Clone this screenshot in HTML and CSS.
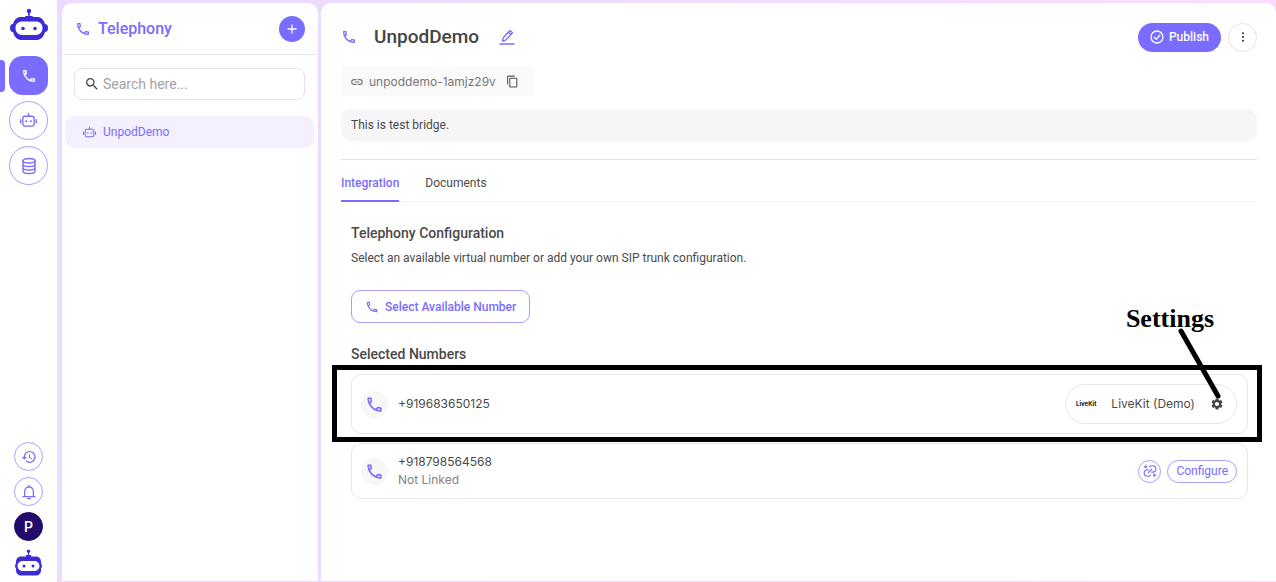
FILE: index.html
```
<!DOCTYPE html>
<html lang="en">
<head>
	<meta charset="UTF-8">
	<title>Telephony</title>
	<link rel="stylesheet" href="styles.css">
</head>
<body>
	<svg class="sprite" aria-hidden="true">
		<symbol id="phone" viewBox="0 0 24 24"><path d="M6.54 5c.06.89.21 1.76.45 2.59l-1.2 1.2c-.41-1.2-.67-2.47-.76-3.79h1.51m9.86 12.02c.85.24 1.72.39 2.6.45v1.49c-1.32-.09-2.59-.35-3.8-.75l1.2-1.19M7.5 3H4c-.55 0-1 .45-1 1 0 9.39 7.61 17 17 17 .55 0 1-.45 1-1v-3.49c0-.55-.45-1-1-1-1.24 0-2.45-.2-3.57-.57-.1-.04-.21-.05-.31-.05-.26 0-.51.1-.71.29l-2.2 2.2c-2.83-1.45-5.15-3.76-6.59-6.59l2.2-2.2c.28-.28.36-.67.25-1.02C8.7 6.45 8.5 5.25 8.5 4c0-.55-.45-1-1-1z"/></symbol>
		<symbol id="robot" viewBox="0 0 24 24"><g fill="none" stroke="currentColor" stroke-width="1.9" stroke-linecap="round"><rect x="4" y="6" width="16" height="14" rx="3"/><path d="M12 6V2M1 11v4M23 11v4"/></g><circle cx="8.800" cy="13" r="1.500"/><circle cx="15.200" cy="13" r="1.500"/></symbol>
	</svg>
	<div class="app">
		<nav class="rail">
			<a class="logo" href="#" aria-label="Home"><svg width="38" height="33" viewBox="0 0 38 33"><circle cx="19" cy="3" r="2.200"/><path d="M18.200 4h1.600v5h-1.600z"/><path fill-rule="evenodd" d="M16 8h6q1 0 1 1h3c5 0 7 2 8.500 5.500l.5 1.500c2 0 3 1.500 3 4s-1 4-3 4l-.5 1.500c-1.500 4-4 6.500-8.500 6.500H12c-4.500 0-7-2.500-8.500-6.500L3 24c-2 0-3-1.500-3-4s1-4 3-4l.5-1.500C5 11 7 9 12 9h3q0-1 1-1zM12.500 13.500C8 13.500 5.500 16 5.500 20s2.500 7 7 7h13c4.500 0 7-3 7-7s-2.500-6.500-7-6.500z"/><circle cx="13" cy="20.500" r="1.800"/><circle cx="25" cy="20.500" r="1.800"/></svg></a>
			<a class="rail-item current" href="#" aria-label="Telephony"><svg width="16" height="16"><use href="#phone"/></svg></a>
			<a class="rail-item" href="#" aria-label="Agents"><svg width="17" height="17"><use href="#robot"/></svg></a>
			<a class="rail-item" href="#" aria-label="Knowledge base"><svg class="line" width="18" height="18" viewBox="0 0 24 24"><ellipse cx="12" cy="5" rx="8" ry="3"/><path d="M4 5v14c0 1.700 3.600 3 8 3s8-1.300 8-3V5M4 9.700c0 1.700 3.600 3 8 3s8-1.300 8-3M4 14.300c0 1.700 3.600 3 8 3s8-1.300 8-3"/></svg></a>
			<div class="rail-bottom">
				<button class="round" aria-label="History"><svg width="16" height="16" viewBox="0 0 24 24"><path d="M13 3a9 9 0 0 0-9 9H1l3.900 3.900.07.140L9 12H6c0-3.870 3.130-7 7-7s7 3.130 7 7-3.130 7-7 7c-1.930 0-3.680-.79-4.940-2.060l-1.420 1.420A8.950 8.950 0 0 0 13 21a9 9 0 0 0 0-18zm-1 5v5l4.280 2.540.72-1.210-3.500-2.080V8H12z"/></svg></button>
				<button class="round" aria-label="Notifications"><svg class="line" width="16" height="16" viewBox="0 0 24 24"><path d="M3 19h18M5.500 19v-8a6.500 6.500 0 0 1 13 0v8M12 4V2M10 22h4"/></svg></button>
				<button class="round avatar">P</button>
				<a class="logo small" href="#" aria-label="Assistant"><svg width="27" height="27" viewBox="0 0 27 27"><circle cx="13.500" cy="2.200" r="1.700"/><path d="M13 3h1v4h-1z"/><path fill-rule="evenodd" d="M11 6h5v1.500h4c4 0 6 2 6 5.500v1.500c1.200.8 1.200 4.200 0 5V21c0 3.500-2 5.500-6 5.500H7c-4 0-6-2-6-5.500v-1.500c-1.200-.8-1.200-4.200 0-5V13c0-3.500 2-5.500 6-5.500h4zM7.500 12c-3 0-5 2.500-5 5s2 5 5 5h12c3 0 5-2.500 5-5s-2-5-5-5z"/><circle cx="9" cy="17" r="1.500"/><circle cx="18" cy="17" r="1.500"/></svg></a>
			</div>
		</nav>
		<aside class="panel">
			<header class="panel-head">
				<svg width="16" height="16"><use href="#phone"/></svg>
				<h2>Telephony</h2>
				<button class="add" aria-label="Add"><svg width="12" height="12" viewBox="0 0 12 12"><path d="M6 1.500v9M1.500 6h9" stroke="currentColor" stroke-width="1.300"/></svg></button>
			</header>
			<label class="search">
				<svg width="16" height="16" viewBox="0 0 24 24"><path d="M15.500 14h-.79l-.28-.27A6.470 6.470 0 0 0 16 9.500 6.500 6.500 0 1 0 9.500 16c1.610 0 3.090-.59 4.230-1.570l.27.28v.79l5 4.990L20.490 19l-4.990-5zm-6 0C7.010 14 5 11.990 5 9.500S7.010 5 9.500 5 14 7.010 14 9.500 11.990 14 9.500 14z"/></svg>
				<input type="text" placeholder="Search here..." aria-label="Search">
			</label>
			<a class="bridge" href="#"><svg width="13" height="13"><use href="#robot"/></svg>UnpodDemo</a>
		</aside>
		<main class="main">
			<header class="title">
				<svg width="16" height="16"><use href="#phone"/></svg>
				<h1>UnpodDemo</h1>
				<button class="edit" aria-label="Edit name"><svg class="line" width="16" height="16" viewBox="0 0 16 16"><path d="M1 15h14M3.500 12l.7-3.200L11 1.500l2.500 2.300-6.800 7.300zM9.500 3.200l2.400 2.300"/></svg></button>
				<button class="publish"><svg class="line" width="14" height="14" viewBox="0 0 14 14"><circle cx="7" cy="7" r="6"/><path d="M4.200 7.200l2 2 3.800-4.200"/></svg>Publish</button>
				<button class="more" aria-label="More"><svg width="10" height="10" viewBox="0 0 24 24"><circle cx="12" cy="3" r="2.500"/><circle cx="12" cy="12" r="2.500"/><circle cx="12" cy="21" r="2.500"/></svg></button>
			</header>
			<div class="slug">
				<svg width="14" height="14" viewBox="0 0 24 24"><path d="M3.900 12c0-1.710 1.390-3.100 3.100-3.100h4V7H7a5 5 0 0 0 0 10h4v-1.900H7c-1.710 0-3.100-1.390-3.100-3.100zM8 13h8v-2H8v2zm9-6h-4v1.900h4a3.100 3.100 0 0 1 0 6.200h-4V17h4a5 5 0 0 0 0-10z"/></svg>
				<span>unpoddemo-1amjz29v</span>
				<button aria-label="Copy"><svg width="13" height="13" viewBox="0 0 24 24"><path d="M16 1H4a2 2 0 0 0-2 2v14h2V3h12V1zm3 4H8a2 2 0 0 0-2 2v14c0 1.100.9 2 2 2h11a2 2 0 0 0 2-2V7a2 2 0 0 0-2-2zm0 16H8V7h11v14z"/></svg></button>
			</div>
			<p class="desc">This is test bridge.</p>
			<nav class="tabs">
				<a class="current" href="#">Integration</a>
				<a href="#">Documents</a>
			</nav>
			<section class="config">
				<h3>Telephony Configuration</h3>
				<p>Select an available virtual number or add your own SIP trunk configuration.</p>
				<button class="select"><svg width="14" height="14"><use href="#phone"/></svg>Select Available Number</button>
				<h3>Selected Numbers</h3>
				<div class="number linked">
					<span class="call"><svg width="19" height="19"><use href="#phone"/></svg></span>
					<div class="info">+919683650125</div>
					<div class="provider">
						<span class="brand">LiveKit</span>
						<span>LiveKit (Demo)</span>
						<button aria-label="Settings"><svg width="14" height="14" viewBox="0 0 24 24"><path d="M19.140 12.940c.04-.3.060-.61.060-.94 0-.32-.02-.64-.07-.94l2.030-1.580a.49.49 0 0 0 .12-.61l-1.920-3.320a.488.488 0 0 0-.59-.22l-2.390.96c-.5-.38-1.030-.7-1.620-.94l-.36-2.540a.484.484 0 0 0-.48-.41h-3.840c-.24 0-.43.170-.47.410l-.36 2.540c-.59.240-1.130.570-1.620.940l-2.390-.96a.48.48 0 0 0-.59.220L2.740 8.870c-.12.210-.08.470.12.610l2.030 1.580c-.05.300-.09.630-.09.940s.020.640.070.940l-2.030 1.580a.49.49 0 0 0-.12.610l1.920 3.320c.12.220.37.290.59.220l2.390-.96c.5.380 1.030.700 1.620.940l.36 2.540c.05.240.24.410.48.410h3.840c.24 0 .44-.17.47-.41l.36-2.540c.59-.24 1.130-.56 1.620-.94l2.390.96c.22.080.47 0 .59-.22l1.920-3.320c.12-.22.070-.47-.12-.61zM12 15.600a3.600 3.600 0 1 1 0-7.200 3.600 3.600 0 0 1 0 7.200z"/></svg></button>
					</div>
					<div class="frame"></div>
					<div class="callout">Settings
						<svg width="44" height="72" viewBox="0 0 44 72"><path d="M3 3l37 65"/></svg>
					</div>
				</div>
				<div class="number">
					<span class="call"><svg width="19" height="19"><use href="#phone"/></svg></span>
					<div class="info">+918798564568<small>Not Linked</small></div>
					<button class="unlink" aria-label="Unlink"><svg class="line" width="14" height="14" viewBox="0 0 24 24"><path d="M9 10H7a5 5 0 0 0-5 5v1a5 5 0 0 0 5 5h2a5 5 0 0 0 4-2M15 14h2a5 5 0 0 0 5-5V8a5 5 0 0 0-5-5h-2a5 5 0 0 0-4 2M9 15l6-6M5 2v5M2 5h4M19 17v5M18 19h4"/></svg></button>
					<button class="configure">Configure</button>
				</div>
			</section>
		</main>
	</div>
</body>
</html>
```
FILE: styles.css
```
*{
	margin: 0;
	padding: 0;
	box-sizing: border-box;
}
body{
	font: 12px/18px Roboto, "Liberation Sans", sans-serif;
	color: #4a4a4a;
}
button, input{
	font: inherit;
	color: inherit;
	background: none;
	border: 0;
}
button{
	cursor: pointer;
}
a{
	color: inherit;
	text-decoration: none;
}
svg{
	display: block;
	flex: none;
	fill: currentColor;
}
.line{
	fill: none;
	stroke: currentColor;
	stroke-width: 1.3;
	stroke-linecap: round;
	stroke-linejoin: round;
}
svg.line[viewBox="0 0 24 24"]{
	stroke-width: 1.9;
}
.sprite{
	position: absolute;
	width: 0;
	height: 0;
}
.app{
	display: flex;
	min-height: 100vh;
	background: linear-gradient(100deg, #ebdcff 30%, #fddcfd);
}

/* left rail */
.rail{
	width: 57px;
	padding: 8px 0 6px;
	background: #fff;
	display: flex;
	flex-direction: column;
	align-items: center;
	gap: 6px;
	color: #796cff;
}
.logo{
	color: #3d2bd8;
	margin-bottom: 9px;
}
.rail-item{
	position: relative;
	width: 39px;
	height: 39px;
	border: 1px solid #a79eff;
	border-radius: 50%;
	display: flex;
	align-items: center;
	justify-content: center;
}
.rail-item.current{
	background: #796cff;
	border-color: #796cff;
	border-radius: 13px;
	color: #fff;
}
.rail-item.current::before{
	content: "";
	position: absolute;
	left: -10px;
	top: 3px;
	width: 5px;
	height: 32px;
	border-radius: 0 4px 4px 0;
	background: #796cff;
}
.rail-bottom{
	margin-top: auto;
	display: flex;
	flex-direction: column;
	align-items: center;
	gap: 6px;
}
.round{
	width: 29px;
	height: 29px;
	border: 1px solid #a79eff;
	border-radius: 50%;
	display: flex;
	align-items: center;
	justify-content: center;
}
.avatar{
	background: #230b6b;
	border-color: #230b6b;
	color: #fff;
	font-size: 14px;
	font-weight: 500;
}
.logo.small{
	margin: 2px 0 0;
}

/* list panel */
.panel{
	width: 256px;
	margin: 3px 3px 1px 5px;
	background: #fff;
	border-radius: 10px 10px 0 0;
}
.panel-head{
	height: 52px;
	padding: 0 13px;
	border-bottom: 1px solid #e8e8e8;
	display: flex;
	align-items: center;
	color: #796cff;
}
.panel-head h2{
	margin-left: 7px;
	font-size: 16px;
	font-weight: 500;
}
.add{
	width: 26px;
	height: 26px;
	margin-left: auto;
	border-radius: 50%;
	background: #796cff;
	color: #fff;
	display: flex;
	align-items: center;
	justify-content: center;
}
.search{
	height: 32px;
	margin: 13px 13px 16px 12px;
	padding: 0 9px;
	border: 1px solid #e3e3e3;
	border-radius: 8px;
	display: flex;
	align-items: center;
	gap: 3px;
}
.search input{
	flex: 1;
	min-width: 0;
	font-size: 14px;
	outline: none;
}
.search input::placeholder{
	color: #a3a3a3;
}
.bridge{
	height: 32px;
	margin: 0 4px 0 3px;
	padding: 0 18px;
	border-radius: 10px;
	background: #f4f0ff;
	color: #796cff;
	display: flex;
	align-items: center;
	gap: 7px;
}

/* detail */
.main{
	flex: 1;
	min-width: 0;
	margin: 3px 0 1px;
	padding: 19px 19px 0 20px;
	background: #fff;
	border-radius: 10px 10px 0 0;
}
.title{
	height: 30px;
	display: flex;
	align-items: center;
	color: #796cff;
}
.title h1{
	margin: 0 20px 0 17px;
	font-size: 19px;
	line-height: 24px;
	font-weight: 500;
	color: #444;
}
.publish{
	height: 29px;
	margin-left: auto;
	padding: 0 12px;
	border-radius: 15px;
	background: #796cff;
	color: #fff;
	font-weight: 500;
	display: flex;
	align-items: center;
	gap: 5px;
}
.more{
	width: 29px;
	height: 29px;
	margin-left: 7px;
	border: 1px solid #e3e3e3;
	border-radius: 50%;
	color: #333;
	display: flex;
	align-items: center;
	justify-content: center;
}
.slug{
	width: fit-content;
	height: 29px;
	margin: 15px 0 13px;
	padding: 0 16px 0 9px;
	background: #fafafa;
	color: #777;
	display: flex;
	align-items: center;
}
.slug span{
	margin: 0 10px 0 5px;
}
.slug, .info, .provider{
	font-family: Inter, "Liberation Sans", sans-serif;
}
.slug button{
	color: #555;
}
.desc{
	padding: 7px 10px;
	border-radius: 10px;
	background: #f6f6f6;
}
.tabs{
	margin-top: 18px;
	border-top: 1px solid #e3e3e3;
	border-bottom: 1px solid #f3f3f3;
	display: flex;
	gap: 26px;
}
.tabs a{
	padding: 14px 0 8px;
	border-bottom: 2px solid transparent;
	margin-bottom: -1px;
}
.tabs .current{
	color: #796cff;
	border-color: #796cff;
	font-weight: 500;
}
.config{
	padding: 21px 9px 0 10px;
}
.config h3{
	font-size: 14px;
	line-height: 20px;
	font-weight: 500;
}
.config p{
	margin: 6px 0 23px;
}
.select{
	height: 33px;
	margin-bottom: 21px;
	padding: 0 13px;
	border: 1px solid #a79eff;
	border-radius: 9px;
	color: #796cff;
	font-weight: 500;
	display: flex;
	align-items: center;
	gap: 6px;
}
.number{
	min-height: 56px;
	margin-top: 9px;
	padding: 0 10px 0 9px;
	border: 1px solid #e6e6e6;
	border-radius: 10px;
	display: flex;
	align-items: center;
}
.number.linked{
	position: relative;
	min-height: 60px;
	margin-top: 10px;
}
.call{
	width: 27px;
	height: 27px;
	border-radius: 50%;
	background: #f7f7f7;
	color: #796cff;
	display: flex;
	align-items: center;
	justify-content: center;
}
.info{
	margin: 0 auto 0 10px;
}
.info small{
	display: block;
	font-size: 12px;
	color: #848484;
}
.provider{
	height: 40px;
	padding: 0 12px 0 10px;
	border: 1px solid #e6e6e6;
	border-radius: 20px;
	display: flex;
	align-items: center;
	gap: 15px;
}
.provider button{
	color: #444;
}
.brand{
	font-size: 6px;
	font-weight: 700;
	color: #111;
}
.unlink{
	width: 23px;
	height: 23px;
	border: 1px solid #a79eff;
	border-radius: 50%;
	color: #796cff;
	display: flex;
	align-items: center;
	justify-content: center;
}
.configure{
	height: 23px;
	margin-left: 6px;
	padding: 0 8px;
	border: 1px solid #a79eff;
	border-radius: 12px;
	color: #796cff;
}

/* annotation over the linked number */
.frame{
	position: absolute;
	inset: -10px -15px -9px -20px;
	border: 5px solid #000;
	pointer-events: none;
}
.callout{
	position: absolute;
	right: 33px;
	top: -71px;
	font: bold 26px/30px "Liberation Serif", serif;
	color: #000;
	pointer-events: none;
}
.callout svg{
	position: absolute;
	left: 52px;
	top: 24px;
	fill: none;
	stroke: #000;
	stroke-width: 5;
	stroke-linecap: round;
}
```
